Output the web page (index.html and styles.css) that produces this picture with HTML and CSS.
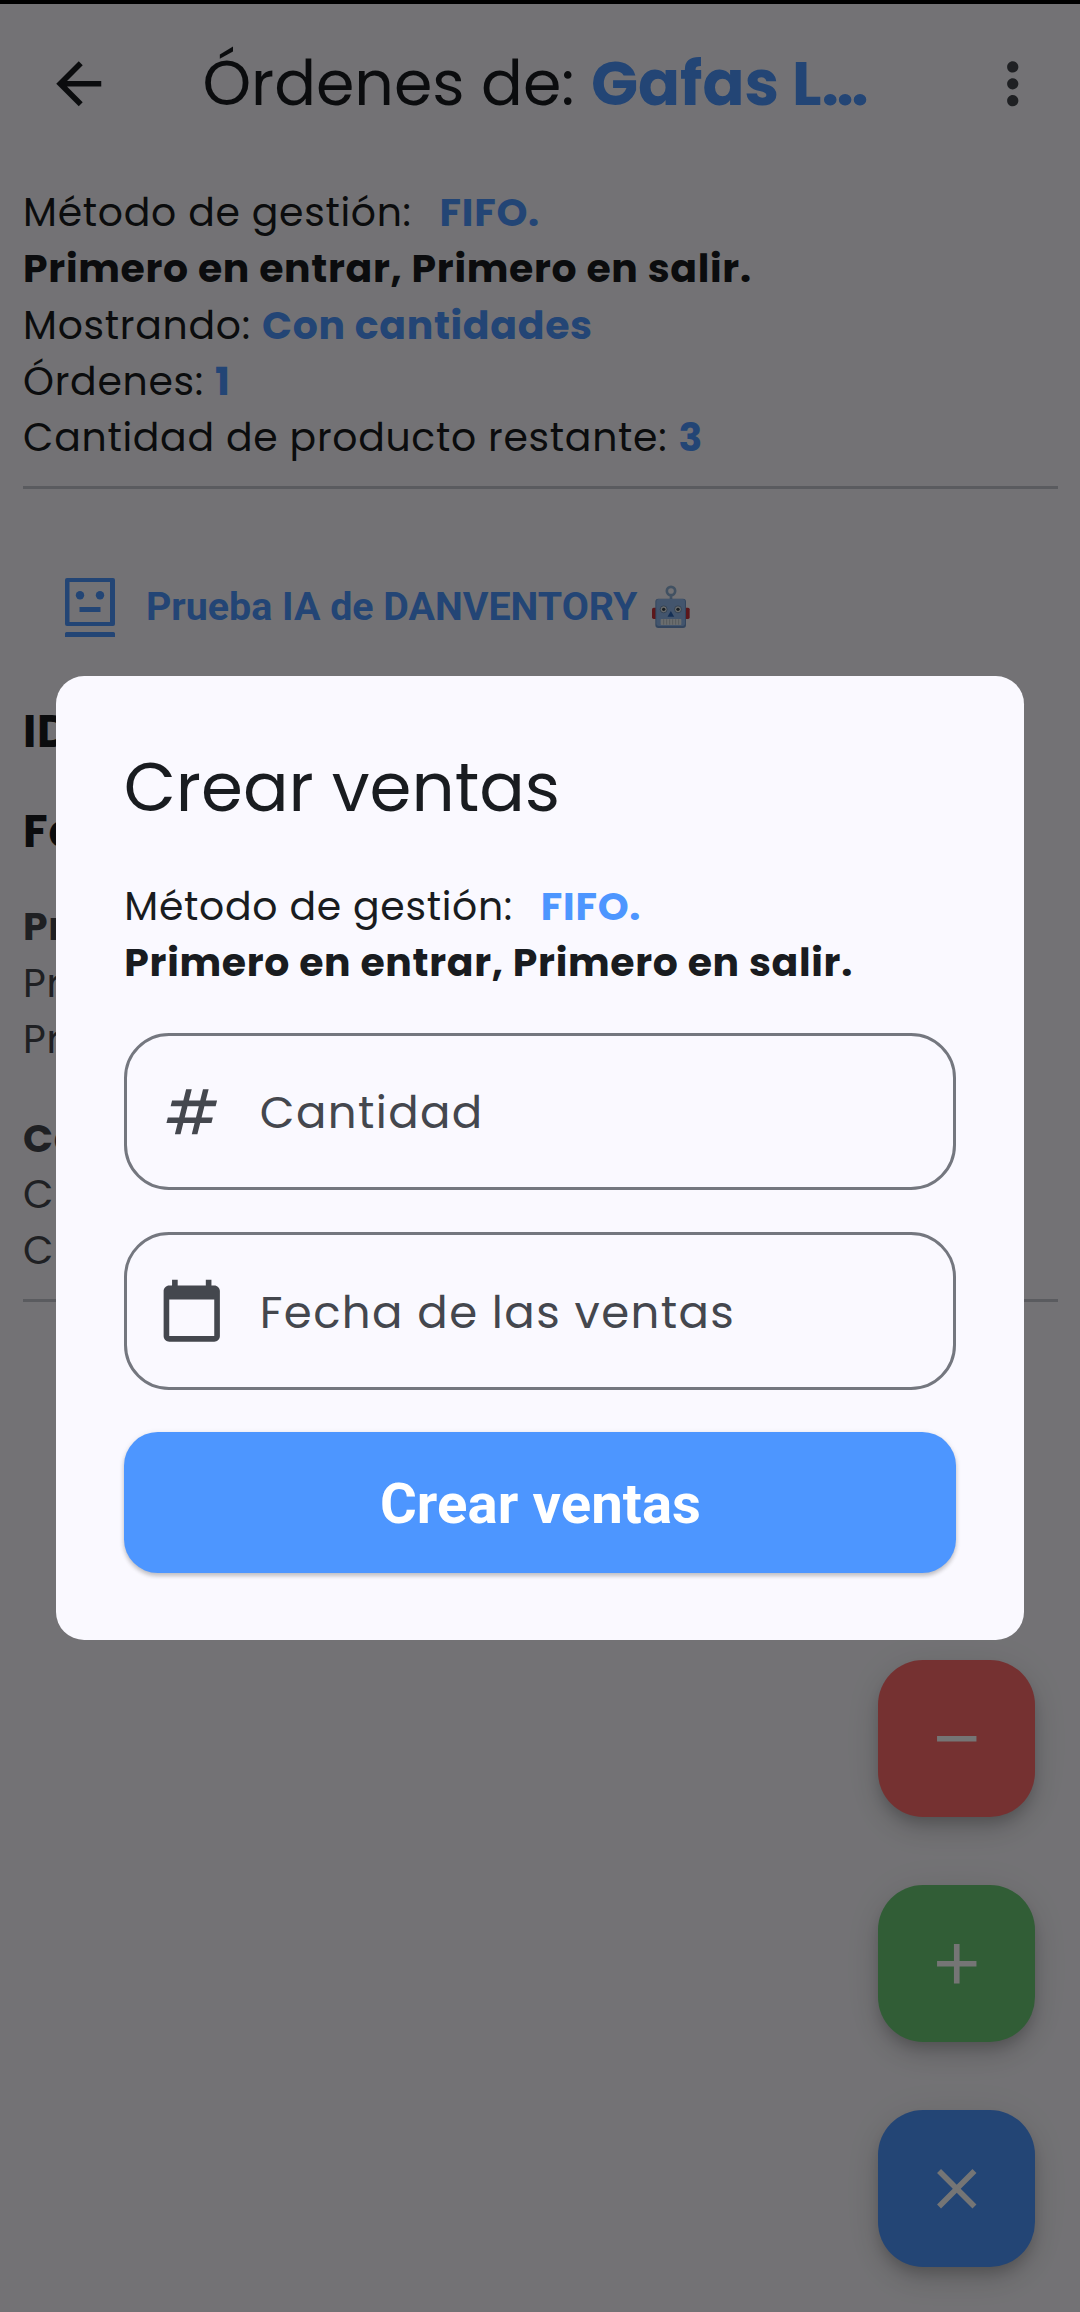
FILE: index.html
```html
<!DOCTYPE html>
<html lang="es">
<head>
<meta charset="utf-8">
<title>Órdenes</title>
<link rel="stylesheet" href="styles.css">
</head>
<body>
<div class="screen">
  <div class="status-strip"></div>
  <header class="app-bar">
    <svg class="icon" viewBox="0 0 24 24"><path d="M20 11H7.83l5.59-5.59L12 4l-8 8 8 8 1.41-1.41L7.83 13H20v-2z"/></svg>
    <h1 class="app-title">Órdenes de: <b>Gafas L…</b></h1>
    <svg class="icon icon-more" viewBox="0 0 24 24"><path d="M12 8c1.1 0 2-.9 2-2s-.9-2-2-2-2 .9-2 2 .9 2 2 2zm0 2c-1.1 0-2 .9-2 2s.9 2 2 2 2-.9 2-2-.9-2-2-2zm0 6c-1.1 0-2 .9-2 2s.9 2 2 2 2-.9 2-2-.9-2-2-2z"/></svg>
  </header>
  <main class="content">
    <section class="summary">
      <p>Método de gestión: <b class="accent method">FIFO.</b></p>
      <p><b>Primero en entrar, Primero en salir.</b></p>
      <p>Mostrando: <b class="accent">Con cantidades</b></p>
      <p>Órdenes: <b class="accent">1</b></p>
      <p>Cantidad de producto restante: <b class="accent">3</b></p>
    </section>
    <hr class="divider">
    <button class="ai-button">
      <svg class="ai-icon" viewBox="0 0 50 60"><path fill-rule="evenodd" d="M2 0h46a2 2 0 0 1 2 2v44a2 2 0 0 1-2 2H2a2 2 0 0 1-2-2V2a2 2 0 0 1 2-2zm2.500 4v40h40.500V4zM14.500 29h21v5h-21zM1.500 54h47a1.500 1.500 0 0 1 1.500 1.500v3.500H0v-3.500a1.500 1.500 0 0 1 1.500-1.500z"/><circle cx="15" cy="17.300" r="4.200"/><circle cx="35" cy="17.300" r="4.200"/></svg>
      <span>Prueba IA de DANVENTORY</span>
      <svg class="robot" viewBox="66 73 114 130" role="img" aria-label="robot">
        <rect x="66" y="141" width="16" height="34" rx="5" fill="#c8323c"/>
        <rect x="163" y="141" width="16" height="34" rx="5" fill="#c8323c"/>
        <circle cx="123" cy="91" r="12.500" fill="none" stroke="#8fb0d6" stroke-width="8"/>
        <path d="M119 105h8v12h-8z" fill="#8fb0d6"/>
        <rect x="76" y="114" width="92" height="88" rx="9" fill="#6f97cc"/>
        <rect x="79" y="115" width="86" height="81" rx="8" fill="#92b9ee"/>
        <circle cx="101" cy="146" r="10.500" fill="#e2e8ea" stroke="#6485ad" stroke-width="2.500"/>
        <circle cx="144" cy="146" r="10.500" fill="#e2e8ea" stroke="#6485ad" stroke-width="2.500"/>
        <circle cx="101" cy="146" r="5" fill="#35424c"/>
        <circle cx="144" cy="146" r="5" fill="#35424c"/>
        <path d="M122.500 151l10 17h-20z" fill="#2c66b8"/>
        <rect x="92" y="175" width="62" height="18" rx="2" fill="#e8edf0"/>
        <path d="M101 176v16M110 176v16M119 176v16M128 176v16M137 176v16M146 176v16" stroke="#a3adb8" stroke-width="2"/>
      </svg>
    </button>
    <section class="order">
      <h2>ID</h2>
      <h2>Fe</h2>
      <div class="group">
        <p><b>Pr</b></p>
        <p>Pr</p>
        <p>Pr</p>
      </div>
      <div class="group">
        <p><b>Ca</b></p>
        <p>C</p>
        <p>C</p>
      </div>
    </section>
    <hr class="divider">
  </main>
  <div class="fabs">
    <button class="fab red"><svg class="icon" viewBox="0 0 24 24"><path d="M19 13H5v-2h14v2z"/></svg></button>
    <button class="fab green"><svg class="icon" viewBox="0 0 24 24"><path d="M19 13h-6v6h-2v-6H5v-2h6V5h2v6h6v2z"/></svg></button>
    <button class="fab blue"><svg class="icon" viewBox="0 0 24 24"><path d="M19 6.41L17.59 5 12 10.59 6.41 5 5 6.41 10.59 12 5 17.59 6.41 19 12 13.41 17.59 19 19 17.59 13.41 12z"/></svg></button>
  </div>
  <div class="scrim">
    <div class="dialog" role="dialog">
      <h2 class="dialog-title">Crear ventas</h2>
      <div class="dialog-text">
        <p>Método de gestión: <b class="accent method">FIFO.</b></p>
        <p><b>Primero en entrar, Primero en salir.</b></p>
      </div>
      <div class="form">
        <div class="field">
          <svg class="icon" viewBox="0 0 24 24"><path d="M20.5 10l.5-2h-4l1-4h-2l-1 4h-4l1-4h-2l-1 4H5l-.5 2h4l-1 4h-4L3 16h4l-1 4h2l1-4h4l-1 4h2l1-4h4l.5-2h-4l1-4h4zm-7 4h-4l1-4h4l-1 4z"/></svg>
          <span>Cantidad</span>
        </div>
        <div class="field">
          <svg class="icon" viewBox="0 0 24 24"><path d="M20 3h-1V1h-2v2H7V1H5v2H4c-1.1 0-2 .9-2 2v16c0 1.1.9 2 2 2h16c1.1 0 2-.9 2-2V5c0-1.1-.9-2-2-2zm0 18H4V8h16v13z"/></svg>
          <span>Fecha de las ventas</span>
        </div>
        <button class="submit"><span>Crear ventas</span></button>
      </div>
    </div>
  </div>
</div>
</body>
</html>
```
FILE: styles.css
```css
* { box-sizing: border-box; margin: 0; padding: 0; }

body {
  background: #faf9fe;
  color: #191c20;
  font-family: Poppins, Inter, "Noto Sans", sans-serif;
  font-size: 39.375px;
  line-height: 56.25px;
  letter-spacing: 0.703px;
}

button { border: 0; background: none; font: inherit; }
b { font-weight: 700; }

.screen { position: relative; width: 1080px; height: 2312px; overflow: hidden; }
.status-strip { height: 4px; background: #000; }
.icon { display: block; width: 67.5px; height: 67.5px; flex: none; fill: currentColor; }
.accent { color: #4d96ff; }
.method { margin-left: 16.7px; }

.app-bar {
  display: flex;
  align-items: center;
  height: 158.5px;
  padding: 0 33.75px 0 45px;
}
.app-title {
  flex: 1;
  padding: 2px 0 0 90px;
  font-size: 61.875px;
  font-weight: 400;
  line-height: 78.75px;
  letter-spacing: 0;
  white-space: nowrap;
}
.app-title b { color: #4d96ff; }
.icon-more { color: #44474e; }

.content { padding: 22.5px 22.5px 0; }
.summary { padding-left: .6px; }
.divider {
  height: 3px;
  margin: 20px 0 21px;
  border: 0;
  background: #c4c6d0;
}

.ai-button {
  display: flex;
  align-items: center;
  height: 135px;
  margin-top: 51.5px;
  padding-left: 42.5px;
  color: #4d96ff;
  font-family: Roboto, sans-serif;
  font-weight: 700;
  letter-spacing: 0;
}
.ai-button span { padding-bottom: 2px; }
.ai-icon { width: 50px; height: 60px; margin-right: 31px; fill: currentColor; }
.robot { width: 38px; height: 43.3px; margin: 0 0 4px 15px; }

.order { padding: 22px 0 0 .6px; color: #44474e; }
.order h2 {
  margin-bottom: 33px;
  color: #191c20;
  font-size: 45px;
  font-weight: 700;
  line-height: 67.5px;
}
.group { padding-top: .5px; }
.group + .group { margin-top: 42.2px; }

.fabs {
  position: absolute;
  right: 45px;
  bottom: 45px;
  display: flex;
  flex-direction: column;
  gap: 67.5px;
}
.fab {
  display: grid;
  place-items: center;
  width: 157.5px;
  height: 157.5px;
  border-radius: 45px;
  color: #fff;
  box-shadow: 0 8px 14px -3px rgba(0, 0, 0, .18), 0 14px 28px rgba(0, 0, 0, .12), 0 3px 40px rgba(0, 0, 0, .06);
}
.red { background: #ff6b6b; }
.green { background: #6bcb77; }
.blue { background: #4d96ff; }

.scrim {
  position: absolute;
  inset: 0;
  padding: 675.5px 56.25px 0;
  background: rgba(0, 0, 0, .54);
}
.dialog {
  padding: 67.5px;
  border-radius: 28.125px;
  background: #faf9ff;
}
.dialog-title {
  font-size: 67.5px;
  font-weight: 400;
  line-height: 90px;
  letter-spacing: 0;
}
.dialog-text { margin: 46px 0 41px; padding-left: .6px; }
.form { display: flex; flex-direction: column; gap: 42.2px; }
.field {
  display: flex;
  align-items: center;
  gap: 34.5px;
  height: 157.5px;
  padding-left: 31px;
  border: 3px solid #74777f;
  border-radius: 45px;
  color: #44474e;
  font-size: 45px;
  letter-spacing: 1.406px;
}
.field span { padding-top: 4px; }
.submit {
  height: 141px;
  padding: 4px 0 0 1px;
  border-radius: 33.75px;
  background: #4d96ff;
  color: #fff;
  font-family: Roboto, sans-serif;
  font-size: 56.25px;
  font-weight: 700;
  letter-spacing: .1px;
  box-shadow: 0 3px 4px rgba(0, 0, 0, .2), 0 1px 6px rgba(0, 0, 0, .08);
}
```
